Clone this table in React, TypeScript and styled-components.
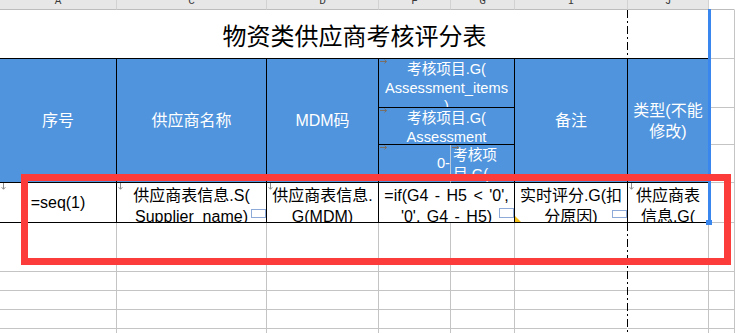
import React from 'react'
import styled, { createGlobalStyle } from 'styled-components'

const GlobalStyle = createGlobalStyle`
  html, body {
    margin: 0;
    padding: 0;
    background: #fff;
  }
  body {
    font-family: "Liberation Sans", "Noto Sans CJK SC", sans-serif;
  }
`

// column widths include the 1px right gridline of each column
const Sheet = styled.div`
  position: relative;
  width: 735px;
  height: 333px;
  overflow: hidden;
  display: grid;
  grid-template-columns: 117px 150px 112px 72px 64px 113px 81px 1fr;
  grid-template-rows: 10px 49px 49px 37px 38px 40px 49px 19px 19px 19px 19px;
  background: #fff;
`

const ColLetter = styled.div<{ $blank?: boolean }>`
  box-sizing: border-box;
  overflow: hidden;
  background: ${p => (p.$blank ? '#fff' : '#e7e7e7')};
  border-right: 1px solid ${p => (p.$blank ? '#fff' : '#d2d2d2')};
  border-bottom: 1px solid #bdbdbd;
  text-align: center;
  font: 11px/11px "Liberation Mono", monospace;
  color: #3a3a3a;

  span {
    display: block;
    margin-top: -4px;
  }
`

const Blank = styled.div<{ $col: number; $row: number }>`
  box-sizing: border-box;
  grid-column: ${p => p.$col};
  grid-row: ${p => p.$row};
  border-right: 1px solid #c4c4c4;
  border-bottom: 1px solid #c4c4c4;
`

const Title = styled.div`
  box-sizing: border-box;
  grid-column: 1 / 8;
  grid-row: 2;
  display: flex;
  align-items: center;
  justify-content: center;
  border-bottom: 1px solid #000;
  font-family: "Noto Sans CJK SC", sans-serif;
  font-size: 24px;
  color: #000;
`

const HeadCell = styled.div<{
  $col: string
  $row: string
  $size?: number
  $lead?: number
  $align?: 'left' | 'center' | 'right'
  $top?: boolean
  $soft?: boolean
}>`
  position: relative;
  box-sizing: border-box;
  grid-column: ${p => p.$col};
  grid-row: ${p => p.$row};
  overflow: hidden;
  display: flex;
  flex-direction: column;
  justify-content: ${p => (p.$top ? 'flex-start' : 'center')};
  padding: ${p => (p.$top ? '1px 2px 0' : p.$align === 'right' ? '0' : '0 2px')};
  background: #4f94dd;
  color: #fff;
  border-right: 1px solid ${p => (p.$soft ? '#b8c8da' : '#000')};
  border-bottom: 1px solid #000;
  font-size: ${p => p.$size ?? 16}px;
  line-height: ${p => p.$lead ?? 21}px;
  text-align: ${p => p.$align ?? 'center'};
  white-space: pre-line;
`

const DataCell = styled.div<{ $col: string; $top?: boolean }>`
  position: relative;
  box-sizing: border-box;
  grid-column: ${p => p.$col};
  grid-row: 6;
  overflow: hidden;
  display: flex;
  flex-direction: column;
  justify-content: ${p => (p.$top ? 'flex-start' : 'center')};
  padding: ${p => (p.$top ? '2px 2px 0' : '0 2px')};
  border-right: 1px solid #000;
  border-bottom: 1px solid #000;
  color: #000;
  font-size: 16px;
  line-height: 21px;
  word-spacing: 2px;
  text-align: center;
  white-space: pre-line;
`

const Mark = styled.svg`
  position: absolute;
  left: 1px;
  top: 0;
`

const Pointer = ({ down }: { down?: boolean }) =>
  down ? (
    <Mark width="5" height="7" viewBox="0 0 5 7">
      <path d="M2.5 0V6M0.6 4.2L2.5 6.3L4.4 4.2" stroke="#8c8c8c" strokeWidth="1" fill="none" />
    </Mark>
  ) : (
    <Mark width="8" height="5" viewBox="0 0 8 5">
      <path d="M0 2.5H6.5M4.5 0.6L6.6 2.5L4.5 4.4" stroke="#7a6f66" strokeWidth="1" fill="none" />
    </Mark>
  )

const Badge = styled.span<{ $h: number }>`
  position: absolute;
  right: 0;
  bottom: 4px;
  width: 15px;
  height: ${p => p.$h}px;
  box-sizing: border-box;
  border: 1px solid #8eaad8;
  background: #fff;
`

const NoteFlag = styled.span`
  position: absolute;
  left: 0;
  bottom: 0;
  width: 0;
  height: 0;
  border-left: 6px solid #f2bf1b;
  border-top: 6px solid transparent;
`

const PageBreak = styled.div<{ $top: number; $h: number }>`
  position: absolute;
  left: 627px;
  top: ${p => p.$top}px;
  width: 1px;
  height: ${p => p.$h}px;
  background: repeating-linear-gradient(
    to bottom,
    #000 0 8px,
    #fff 8px 11px,
    #000 11px 13px,
    #fff 13px 16px
  );
`

const SelectionEdge = styled.div`
  position: absolute;
  left: 708px;
  top: 9px;
  width: 3px;
  height: 213px;
  background: #3a86ef;
`

const FillHandle = styled.div`
  position: absolute;
  left: 706px;
  top: 220px;
  width: 6px;
  height: 5px;
  background: #3a86ef;
`

const Callout = styled.div`
  position: absolute;
  left: 21px;
  top: 174px;
  width: 710px;
  height: 91px;
  box-sizing: border-box;
  border: 7px solid #fc3b3b;
`

const letters = ['A', 'C', 'D', 'F', 'G', 'I', 'J']

export default function App() {
  const lowRows = [8, 9, 10, 11]
  const allCols = [1, 2, 3, 4, 5, 6, 7, 8]

  return (
    <>
      <GlobalStyle />
      <Sheet>
        {letters.map(l => (
          <ColLetter key={l}>
            <span>{l}</span>
          </ColLetter>
        ))}
        <ColLetter $blank />

        <Title>物资类供应商考核评分表</Title>
        {[2, 3, 4, 5, 6].map(r => (
          <Blank key={`k${r}`} $col={8} $row={r} />
        ))}

        <HeadCell $col="1" $row="3 / 6">序号</HeadCell>
        <HeadCell $col="2" $row="3 / 6">供应商名称</HeadCell>
        <HeadCell $col="3" $row="3 / 6">MDM码</HeadCell>
        <HeadCell $col="4 / 6" $row="3" $size={14.67} $lead={18.5} $top>
          <Pointer />
          {'考核项目.G(\nAssessment_items\n)'}
        </HeadCell>
        <HeadCell $col="4 / 6" $row="4" $size={14.67} $lead={18.5} $top>
          <Pointer />
          {'考核项目.G(\nAssessment\n_items)'}
        </HeadCell>
        <HeadCell $col="4" $row="5" $size={14.67} $lead={18.5} $align="right" $soft>
          <Pointer />
          {'0-'}
        </HeadCell>
        <HeadCell $col="5" $row="5" $size={14.67} $lead={18.5} $align="left" $top>
          <Pointer />
          {'考核项\n目.G(\nAssessment'}
        </HeadCell>
        <HeadCell $col="6" $row="3 / 6">备注</HeadCell>
        <HeadCell $col="7" $row="3 / 6">{'类型(不能\n修改)'}</HeadCell>

        <DataCell $col="1">
          <Pointer down />
          =seq(1)
        </DataCell>
        <DataCell $col="2" $top>
          <Pointer down />
          {'供应商表信息.S(\nSupplier_name)'}
          <Badge $h={9} />
        </DataCell>
        <DataCell $col="3" $top>
          <Pointer down />
          {'供应商表信息.\nG(MDM)'}
        </DataCell>
        <DataCell $col="4 / 6" $top>
          {"=if(G4 - H5 < '0',\n'0', G4 - H5)"}
          <Badge $h={10} />
        </DataCell>
        <DataCell $col="6" $top>
          {'实时评分.G(扣\n分原因)'}
          <Badge $h={8} />
          <NoteFlag />
        </DataCell>
        <DataCell $col="7" $top>
          <Pointer down />
          {'供应商表\n信息.G(\n类型)'}
        </DataCell>

        {allCols.map(c => (
          <Blank key={`r7-${c}`} $col={c} $row={7} />
        ))}
        {lowRows.map(r =>
          allCols.map(c => <Blank key={`r${r}-${c}`} $col={c} $row={r} />)
        )}

        <PageBreak $top={10} $h={48} />
        <PageBreak $top={223} $h={110} />
        <SelectionEdge />
        <FillHandle />
        <Callout />
      </Sheet>
    </>
  )
}
